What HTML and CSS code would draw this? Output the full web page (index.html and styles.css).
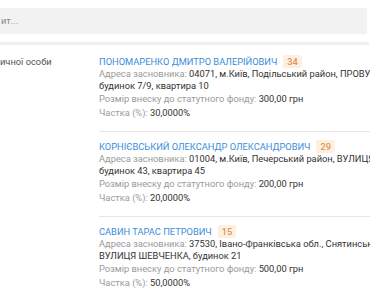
FILE: index.html
```html
<!DOCTYPE html>
<html lang="uk">
<head>
    <meta charset="UTF-8">
    <meta name="viewport" content="width=device-width, initial-scale=1.0">
    <title>Засновники</title>
    <link rel="stylesheet" href="styles.css">
</head>
<body>
    <div class="search">
        <div class="search-input">ит...</div>
    </div>
    <div class="tabs-line"></div>

    <div class="section">
        <div class="section-label">ичної особи</div>
        <div class="founders">
            <div class="founder">
                <div class="founder-name">
                    <a href="#">ПОНОМАРЕНКО ДМИТРО ВАЛЕРІЙОВИЧ</a>
                    <span class="badge">34</span>
                </div>
                <div class="founder-address">
                    <span class="label">Адреса засновника:</span>
                    04071, м.Київ, Подільський район, ПРОВУЛОК ХОРИВИЙ, будинок 7/9, квартира 10
                </div>
                <div class="founder-row"><span class="label">Розмір внеску до статутного фонду:</span> 300,00 грн</div>
                <div class="founder-row"><span class="label">Частка (%):</span> 30,0000%</div>
            </div>
            <div class="founder">
                <div class="founder-name">
                    <a href="#">КОРНІЄВСЬКИЙ ОЛЕКСАНДР ОЛЕКСАНДРОВИЧ</a>
                    <span class="badge">29</span>
                </div>
                <div class="founder-address">
                    <span class="label">Адреса засновника:</span>
                    01004, м.Київ, Печерський район, ВУЛИЦЯ ХРЕЩАТИК, будинок 43, квартира 45
                </div>
                <div class="founder-row"><span class="label">Розмір внеску до статутного фонду:</span> 200,00 грн</div>
                <div class="founder-row"><span class="label">Частка (%):</span> 20,0000%</div>
            </div>
            <div class="founder">
                <div class="founder-name">
                    <a href="#">САВИН ТАРАС ПЕТРОВИЧ</a>
                    <span class="badge">15</span>
                </div>
                <div class="founder-address">
                    <span class="label">Адреса засновника:</span>
                    37530, Івано-Франківська обл., Снятинський район, м.Снятин, ВУЛИЦЯ ШЕВЧЕНКА, будинок 21
                </div>
                <div class="founder-row"><span class="label">Розмір внеску до статутного фонду:</span> 500,00 грн</div>
                <div class="founder-row"><span class="label">Частка (%):</span> 50,0000%</div>
            </div>
        </div>
    </div>
</body>
</html>
```

FILE: styles.css
```css
body {
    margin: 0;
    width: 370px;
    height: 300px;
    overflow: hidden;
    background: #fff;
    font-family: Roboto, "Noto Sans", sans-serif;
    font-size: 9.3px;
    color: #333;
}

.search {
    padding-top: 8px;
    width: 367px;
}

.search-input {
    height: 26px;
    line-height: 26px;
    background: #f2f2f2;
    color: #888;
    padding-left: 1px;
}

.tabs-line {
    width: 369px;
    height: 3px;
    margin-top: 8px;
    background: #efefef;
}

.section {
    display: flex;
    padding-top: 9px;
}

.section-label {
    width: 99px;
    flex-shrink: 0;
    color: #555;
    line-height: 16px;
}

.founders {
    width: 362px;
    flex-shrink: 0;
}

.founder {
    padding: 0 0 11px;
}

.founder + .founder {
    border-top: 1px solid #e6e6e6;
    padding-top: 7px;
}

.founder-name {
    display: flex;
    align-items: center;
    gap: 6px;
    height: 14px;
}

.founder-name a {
    color: #3a8ddb;
    text-decoration: none;
}

.badge {
    background: #fdf0e1;
    color: #e39455;
    padding: 0 4px;
    line-height: 13px;
    border-radius: 2px;
    font-weight: 500;
}

.founder-address {
    line-height: 12px;
}

.founder-row {
    line-height: 14px;
}

.label {
    color: #9a9a9a;
}
```
